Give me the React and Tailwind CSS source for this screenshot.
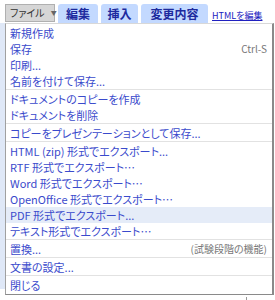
const items = [
  { t: '新規作成' },
  { t: '保存', r: 'Ctrl-S' },
  { t: '印刷...' },
  { t: '名前を付けて保存...', sep: true },
  { t: 'ドキュメントのコピーを作成' },
  { t: 'ドキュメントを削除', sep: true },
  { t: 'コピーをプレゼンテーションとして保存...', sep: true },
  { t: 'HTML (zip) 形式でエクスポート...' },
  { t: 'RTF 形式でエクスポート…' },
  { t: 'Word 形式でエクスポート…' },
  { t: 'OpenOffice 形式でエクスポート…' },
  { t: 'PDF 形式でエクスポート...', hi: true },
  { t: 'テキスト形式でエクスポート…', sep: true },
  { t: '置換...', r: '(試験段階の機能)', sep: true },
  { t: '文書の設定...', sep: true },
  { t: '閉じる' },
]

function Tab({ children, w }) {
  return (
    <div className={`${w} h-[19px] rounded-t-[3px] bg-[#c3d9ff] flex items-center justify-center text-[12px] leading-none font-bold text-[#1d2a9e]`}>
      {children}
    </div>
  )
}

export default function App() {
  return (
    <div className="w-[275px] h-[300px] bg-white relative overflow-hidden text-[#3a4acc] [font-family:'Noto_Sans_CJK_JP','Liberation_Sans',sans-serif] [font-feature-settings:'palt']">
      {/* toolbar */}
      <div className="flex items-end h-[23px] pl-[5px] gap-[3px]">
        <div className="w-[50px] h-[18px] mb-[1px] bg-[#d6d6d6] border border-[#b0b0b0] flex items-center pl-[4px] gap-[6px] text-[10px] leading-none text-[#333] whitespace-nowrap">
          <span>ファイル</span>
          <span className="text-[6px] text-[#666]">▼</span>
        </div>
        <Tab w="w-[40px]">編集</Tab>
        <Tab w="w-[37px]">挿入</Tab>
        <Tab w="w-[67px]">変更内容</Tab>
        <a className="ml-[1px] mb-[3px] text-[9px] leading-none underline text-[#2020c0] whitespace-nowrap">HTMLを編集</a>
      </div>

      <div className="flex">
        <div className="w-[5px] h-[266px] bg-[#dfe8f7]" />
        {/* menu */}
        <div className="w-[269px] border-t border-t-[#d8d8d8] border-l border-l-[#a0a0a0] border-b border-b-[#8a8a8a] border-r-2 border-r-[#8a8a8a] pt-[1px] pb-[1px]">
          {items.map((it, i) => (
            <div key={i} className={it.sep ? 'border-b border-[#e2e2e2] mb-[1px]' : ''}>
              <div className={`h-[16px] flex items-center justify-between pl-[4px] pr-[5px] text-[11px] leading-none whitespace-nowrap ${it.hi ? 'bg-[#e5ecf8]' : ''}`}>
                <span>{it.t}</span>
                {it.r && <span className="text-[10px] text-[#777]">{it.r}</span>}
              </div>
            </div>
          ))}
        </div>
      </div>
      <div className="absolute left-[246px] top-[297px] w-[1px] h-[3px] bg-[#999]" />
    </div>
  )
}
